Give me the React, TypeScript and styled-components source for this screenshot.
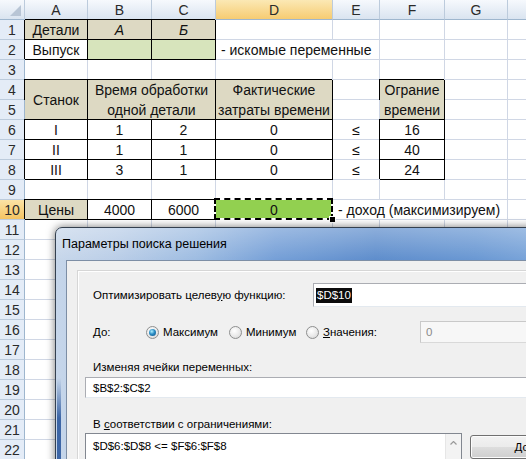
import React from "react";
import styled, { createGlobalStyle, css } from "styled-components";

const TAN = "#ddd9c3";
const PALE_GREEN = "#d7e4bc";
const GREEN = "#92d050";
const GRID = "#d0d7e5";

const GlobalStyle = createGlobalStyle`
  html, body {
    margin: 0;
    padding: 0;
    background: #fff;
  }
  body {
    width: 526px;
    height: 459px;
    overflow: hidden;
  }
`;

const Page = styled.div`
  position: relative;
  width: 526px;
  height: 459px;
  overflow: hidden;
  font-family: "Liberation Sans", Arial, sans-serif;
`;

/* ---------- spreadsheet ---------- */

const Sheet = styled.div`
  display: grid;
  grid-template-columns: 25px 63px 64px 64px 117px 47px 65px 63px 40px;
  grid-template-rows: repeat(23, 20px);
  font-size: 14px;
  color: #111;
  background: #fff;
`;

type Place = { $c: number; $r: number; $cs?: number; $rs?: number };

const placed = css<Place>`
  grid-column: ${(p) => p.$c} / span ${(p) => p.$cs ?? 1};
  grid-row: ${(p) => p.$r} / span ${(p) => p.$rs ?? 1};
  box-sizing: border-box;
  display: flex;
  align-items: center;
`;

const ColHead = styled.div<Place & { $active?: boolean }>`
  ${placed};
  justify-content: center;
  color: #2a2a2a;
  border-right: 1px solid #bccbdc;
  border-bottom: 1px solid #9eb6ce;
  background: ${(p) =>
    p.$active ? "linear-gradient(#fbe8b4, #f6cc72)" : "linear-gradient(#f6f9fd, #dae4f0)"};
`;

const Corner = styled(ColHead)`
  position: relative;
  &::after {
    content: "";
    position: absolute;
    right: 3px;
    bottom: 3px;
    border-left: 11px solid transparent;
    border-bottom: 11px solid #b8c5d5;
  }
`;

const RowHead = styled.div<Place & { $active?: boolean }>`
  ${placed};
  justify-content: center;
  color: #2a2a2a;
  border-right: 1px solid #9eb6ce;
  border-bottom: 1px solid #bccbdc;
  background: ${(p) => (p.$active ? "linear-gradient(#fbe3a6, #f5c462)" : "#e4ecf7")};
`;

type CellProps = Place & { $bg?: string; $boxed?: boolean; $italic?: boolean; $left?: boolean };

const Cell = styled.div<CellProps>`
  ${placed};
  justify-content: ${(p) => (p.$left ? "flex-start" : "center")};
  padding-left: ${(p) => (p.$left ? 5 : 0)}px;
  text-align: center;
  line-height: 20px;
  white-space: nowrap;
  font-style: ${(p) => (p.$italic ? "italic" : "normal")};
  background: ${(p) => p.$bg ?? "transparent"};
  border-right: 1px solid ${(p) => (p.$boxed ? "#000" : GRID)};
  border-bottom: 1px solid ${(p) => (p.$boxed ? "#000" : GRID)};
  box-shadow: ${(p) => (p.$boxed ? "-1px -1px 0 #000" : "none")};
`;

const MarchCell = styled(Cell)`
  position: relative;
  &::before,
  &::after {
    content: "";
    position: absolute;
    left: -2px;
    top: -2px;
    right: -1px;
    bottom: -1px;
  }
  &::before {
    border: 2px solid #fff;
  }
  &::after {
    border: 2px dashed #000;
  }
`;

const FillHandle = styled.span`
  position: absolute;
  right: -4px;
  bottom: -4px;
  width: 5px;
  height: 5px;
  background: #000;
  border: 1px solid #fff;
  z-index: 1;
`;

type Spec = {
  text?: React.ReactNode;
  cs?: number;
  rs?: number;
  bg?: string;
  boxed?: boolean;
  italic?: boolean;
  left?: boolean;
  marching?: boolean;
};

const specs: Record<string, Spec> = {
  "1,1": { text: "Детали", bg: TAN, boxed: true },
  "1,2": { text: "А", bg: TAN, boxed: true, italic: true },
  "1,3": { text: "Б", bg: TAN, boxed: true, italic: true },
  "2,1": { text: "Выпуск", bg: "#fff", boxed: true },
  "2,2": { bg: PALE_GREEN, boxed: true },
  "2,3": { bg: PALE_GREEN, boxed: true },
  "2,4": { text: "- искомые переменные", cs: 2, left: true },
  "4,1": { text: "Станок", rs: 2, bg: TAN, boxed: true },
  "4,2": {
    text: (
      <>
        Время обработки
        <br />
        одной детали
      </>
    ),
    cs: 2,
    rs: 2,
    bg: TAN,
    boxed: true,
  },
  "4,4": {
    text: (
      <>
        Фактические
        <br />
        затраты времени
      </>
    ),
    rs: 2,
    bg: TAN,
    boxed: true,
  },
  "4,6": {
    text: (
      <>
        Ограние
        <br />
        времени
      </>
    ),
    rs: 2,
    bg: TAN,
    boxed: true,
  },
  "10,1": { text: "Цены", bg: TAN, boxed: true },
  "10,2": { text: "4000", bg: "#fff", boxed: true },
  "10,3": { text: "6000", bg: "#fff", boxed: true },
  "10,4": { text: "0", bg: GREEN, marching: true },
  "10,5": { text: "- доход (максимизируем)", cs: 3, left: true },
};

const machines = [
  ["I", "1", "2", "0", "16"],
  ["II", "1", "1", "0", "40"],
  ["III", "3", "1", "0", "24"],
];
machines.forEach((m, i) => {
  const r = 6 + i;
  specs[`${r},1`] = { text: m[0], bg: "#fff", boxed: true };
  specs[`${r},2`] = { text: m[1], bg: "#fff", boxed: true };
  specs[`${r},3`] = { text: m[2], bg: "#fff", boxed: true };
  specs[`${r},4`] = { text: m[3], bg: "#fff", boxed: true };
  specs[`${r},5`] = { text: "≤" };
  specs[`${r},6`] = { text: m[4], bg: "#fff", boxed: true };
});

// H is only a sliver at the right edge, its letter falls outside the window
const LETTERS = ["A", "B", "C", "D", "E", "F", "G", ""];
const ROWS = 22;

function SheetCells() {
  const covered = new Set<string>();
  Object.entries(specs).forEach(([key, s]) => {
    const [r, c] = key.split(",").map(Number);
    for (let dr = 0; dr < (s.rs ?? 1); dr++)
      for (let dc = 0; dc < (s.cs ?? 1); dc++)
        if (dr || dc) covered.add(`${r + dr},${c + dc}`);
  });

  const out: React.ReactNode[] = [<Corner key="corner" $c={1} $r={1} />];
  LETTERS.forEach((l, i) =>
    out.push(
      <ColHead key={`h${i}`} $c={i + 2} $r={1} $active={l === "D"}>
        {l}
      </ColHead>
    )
  );

  for (let r = 1; r <= ROWS; r++) {
    out.push(
      <RowHead key={`r${r}`} $c={1} $r={r + 1} $active={r === 10}>
        {r}
      </RowHead>
    );
    for (let c = 1; c <= LETTERS.length; c++) {
      const key = `${r},${c}`;
      if (covered.has(key)) continue;
      const s = specs[key];
      if (!s) {
        out.push(<Cell key={key} $c={c + 1} $r={r + 1} />);
        continue;
      }
      const Comp = s.marching ? MarchCell : Cell;
      out.push(
        <Comp
          key={key}
          $c={c + 1}
          $r={r + 1}
          $cs={s.cs}
          $rs={s.rs}
          $bg={s.bg}
          $boxed={s.boxed}
          $italic={s.italic}
          $left={s.left}
        >
          <span>{s.text}</span>
          {s.marching && <FillHandle />}
        </Comp>
      );
    }
  }
  return <>{out}</>;
}

/* ---------- solver dialog ---------- */

const Window = styled.div`
  position: absolute;
  left: 55px;
  top: 227px;
  width: 500px;
  height: 250px;
  box-sizing: border-box;
  border: 1px solid #34404f;
  border-radius: 7px 7px 0 0;
  background: linear-gradient(180deg, rgba(255, 255, 255, 0.3) 0px, rgba(255, 255, 255, 0) 34px),
    linear-gradient(90deg, #c6d6ea 0px, #b9cde7 60px, #9cbbe1 140px, #729dd6 220px, #5b8bcb 320px, #6796d2 420px, #7da7db 500px);
  box-shadow: 0 0 9px rgba(0, 0, 0, 0.55);
  display: flex;
  flex-direction: column;
  font-family: "Liberation Sans", Arial, sans-serif;
  font-size: 11.5px;
  color: #000;
  z-index: 2;

  /* glass reflection down the left frame */
  &::before {
    content: "";
    position: absolute;
    left: 1px;
    top: 150px;
    bottom: 0;
    width: 4px;
    background: linear-gradient(rgba(61, 102, 166, 0), #3d66a6 40px);
  }
`;

const TitleBar = styled.div`
  height: 32px;
  flex: none;
  display: flex;
  align-items: center;
  padding-left: 6px;
  font-size: 12.5px;
  color: #000;
`;

const Client = styled.div`
  flex: 1;
  margin-left: 10px;
  background: #f0f0f0;
  border-top: 1px solid #7d8ea5;
  border-left: 1px solid #7d8ea5;
  padding: 9px 0 0 10px;
`;

const Panel = styled.div`
  height: 100%;
  box-sizing: border-box;
  border-top: 1px solid #d6d6d6;
  border-left: 1px solid #d6d6d6;
  box-shadow: inset 1px 1px 0 #fff;
  padding: 12px 0 0 7px;
`;

const Row = styled.div<{ $h: number; $mt?: number }>`
  display: flex;
  align-items: center;
  height: ${(p) => p.$h}px;
  margin-top: ${(p) => p.$mt ?? 0}px;
`;

const Label = styled.div<{ $w?: number; $mt?: number }>`
  box-sizing: border-box;
  ${(p) => (p.$w ? `width: ${p.$w}px; flex: none;` : "")}
  padding-left: 8px;
  margin-top: ${(p) => p.$mt ?? 0}px;
  line-height: 16px;
  white-space: nowrap;
`;

const TextBox = styled.div<{ $disabled?: boolean }>`
  flex: 1;
  align-self: stretch;
  display: flex;
  align-items: center;
  box-sizing: border-box;
  padding-left: ${(p) => (p.$disabled ? 5 : 2)}px;
  background: ${(p) => (p.$disabled ? "#f7f7f7" : "#fff")};
  border: 1px solid ${(p) => (p.$disabled ? "#c9c9c9" : "#abadb3")};
  border-bottom-color: ${(p) => (p.$disabled ? "#d9d9d9" : "#e3e9ef")};
  color: ${(p) => (p.$disabled ? "#8a8a8a" : "#000")};
  white-space: nowrap;
`;

const Selected = styled.span`
  background: #0c0c0c;
  color: #fff;
  line-height: 15px;
  padding: 0 1px;
`;

const Option = styled.div<{ $w: number }>`
  width: ${(p) => p.$w}px;
  flex: none;
  display: flex;
  align-items: center;
  gap: 4px;
  white-space: nowrap;
`;

const RadioDot = styled.span<{ $on?: boolean }>`
  position: relative;
  flex: none;
  width: 11px;
  height: 11px;
  border-radius: 50%;
  border: 1px solid #8e8f8f;
  background: radial-gradient(circle at 40% 35%, #ffffff 0%, #e9e9e9 55%, #cfcfcf 100%);
  ${(p) =>
    p.$on &&
    css`
      &::after {
        content: "";
        position: absolute;
        left: 2px;
        top: 2px;
        width: 7px;
        height: 7px;
        border-radius: 50%;
        background: radial-gradient(circle at 40% 35%, #aef0ff 0%, #2a8cc4 45%, #0f4f82 100%);
      }
    `}
`;

const FieldBox = styled.div`
  margin-top: 2px;
  height: 21px;
  box-sizing: border-box;
  display: flex;
  align-items: center;
  padding-left: 7px;
  background: #fff;
  border: 1px solid #abadb3;
  border-bottom-color: #e3e9ef;
  white-space: nowrap;
`;

const Constraints = styled.div`
  display: flex;
  align-items: flex-start;
  gap: 8px;
  margin-top: 1px;
`;

const ListBox = styled.div`
  width: 377px;
  height: 70px;
  flex: none;
  box-sizing: border-box;
  display: flex;
  background: #fff;
  border: 1px solid #828790;
`;

const ListText = styled.div`
  flex: 1;
  padding: 6px 0 0 7px;
  white-space: nowrap;
`;

const ScrollBar = styled.div`
  width: 16px;
  flex: none;
  background: #f3f3f3;
  border-left: 1px solid #e6e6e6;
  display: flex;
  justify-content: center;
  padding-top: 7px;
  box-sizing: border-box;
`;

const Button = styled.div`
  width: 140px;
  height: 24px;
  margin-top: 2px;
  flex: none;
  box-sizing: border-box;
  display: flex;
  align-items: center;
  justify-content: center;
  border: 1px solid #707070;
  border-radius: 3px;
  background: linear-gradient(#f2f2f2 0%, #ebebeb 50%, #dddddd 51%, #cfcfcf 100%);
  box-shadow: inset 0 0 0 1px #fcfcfc;
`;

function SolverDialog() {
  return (
    <Window>
      <TitleBar>Параметры поиска решения</TitleBar>
      <Client>
        <Panel>
          <Row $h={24}>
            <Label $w={228}>
              Оптимизировать целев<u>у</u>ю функцию:
            </Label>
            <TextBox>
              <Selected>$D$10</Selected>
            </TextBox>
          </Row>

          <Row $h={22} $mt={14}>
            <Label $w={61}>До:</Label>
            <Option $w={83}>
              <RadioDot $on />
              Максимум
            </Option>
            <Option $w={77}>
              <RadioDot />
              Минимум
            </Option>
            <Option $w={114}>
              <RadioDot />
              <span>
                <u>З</u>начения:
              </span>
            </Option>
            <TextBox $disabled>0</TextBox>
          </Row>

          <Label $mt={16}>Изменяя ячейки переменных:</Label>
          <FieldBox>$B$2:$C$2</FieldBox>

          <Label $mt={18}>
            В <u>с</u>оответствии с ограничениями:
          </Label>
          <Constraints>
            <ListBox>
              <ListText>$D$6:$D$8 &lt;= $F$6:$F$8</ListText>
              <ScrollBar>
                <svg width="7" height="4" viewBox="0 0 7 4">
                  <polyline points="0.5,3.5 3.5,0.5 6.5,3.5" fill="none" stroke="#9a9a9a" strokeWidth="1.2" />
                </svg>
              </ScrollBar>
            </ListBox>
            <Button>Добавить</Button>
          </Constraints>
        </Panel>
      </Client>
    </Window>
  );
}

export default function App() {
  return (
    <Page>
      <GlobalStyle />
      <Sheet>
        <SheetCells />
      </Sheet>
      <SolverDialog />
    </Page>
  );
}
